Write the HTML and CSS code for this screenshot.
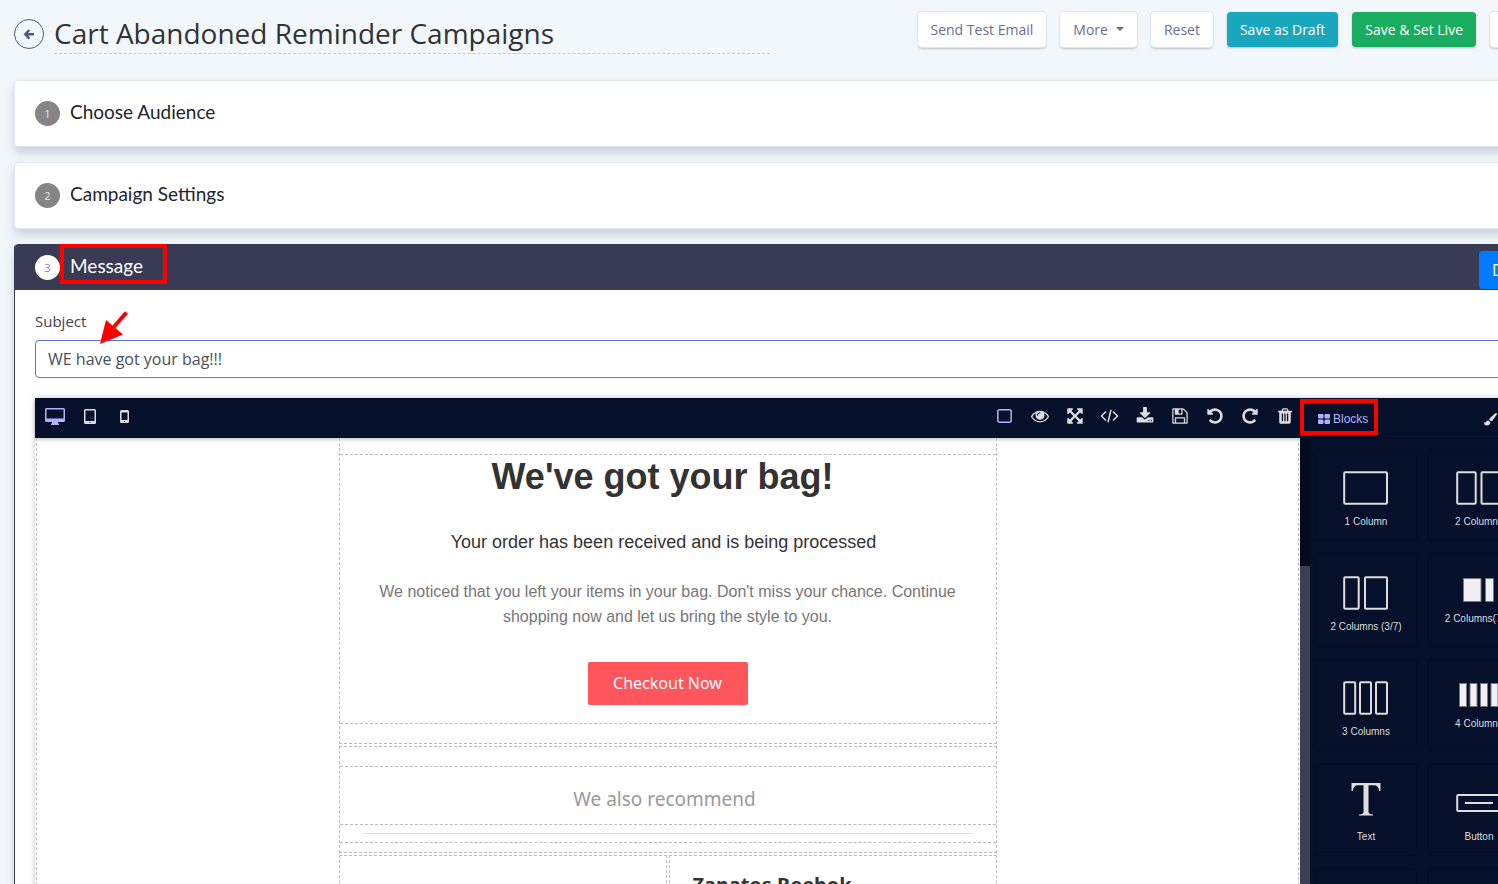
FILE: index.html
```html
<!DOCTYPE html>
<html lang="en">
<head>
<meta charset="utf-8">
<title>Cart Abandoned Reminder Campaigns</title>
<link rel="stylesheet" href="styles.css">
</head>
<body>
<svg class="sprite" aria-hidden="true">
  <symbol id="undo" viewBox="0 0 1792 1792"><path d="M1664 896q0 156-61 298t-164 245-245 164-298 61q-172 0-327-72.5t-264-204.5q-7-10-6.5-22.5t8.5-20.5l137-138q10-9 25-9 16 2 23 12 73 95 179 147t225 52q104 0 198.5-40.5t163.5-109.5 109.5-163.5 40.5-198.5-40.5-198.5-109.5-163.5-163.5-109.5-198.5-40.5q-98 0-188 35.5t-160 101.5l137 138q31 30 14 69-17 40-59 40h-448q-26 0-45-19t-19-45v-448q0-42 40-59 39-17 69 14l130 129q107-101 244.5-156.5t284.5-55.5q156 0 298 61t245 164 164 245 61 298z"/></symbol>
</svg>
<div class="page">
  <header class="topbar">
    <button class="back" aria-label="Back"><svg width="12" height="12" viewBox="0 0 12 12"><path d="M6.300 2 2.300 6.300 6.300 10.600M2.500 6.300H11" fill="none" stroke="currentColor" stroke-width="2.400"/></svg></button>
    <h1 class="title">Cart Abandoned Reminder Campaigns</h1>
    <div class="actions">
      <button class="btn">Send Test Email</button>
      <button class="btn">More<span class="caret"></span></button>
      <button class="btn">Reset</button>
      <button class="btn btn-draft">Save as Draft</button>
      <button class="btn btn-live">Save &amp; Set Live</button>
      <button class="btn btn-last">Cancel</button>
    </div>
  </header>

  <main class="steps">
    <section class="card step"><span class="num">1</span><h2 class="step-title">Choose Audience</h2></section>
    <section class="card step"><span class="num">2</span><h2 class="step-title">Campaign Settings</h2></section>

    <section class="card message">
      <div class="message-head">
        <span class="num num-active">3</span>
        <h2 class="step-title marked">Message<span class="mark mark-message"></span></h2>
        <button class="done">Done</button>
      </div>
      <div class="message-body">
        <div class="field">
          <label class="label" for="subject">Subject</label>
          <input class="input" id="subject" type="text" value="WE have got your bag!!!">
          <svg class="pointer" width="30" height="34" viewBox="0 0 30 34"><path d="M26.500 1.500 12 18" stroke="#f00" stroke-width="4"/><path d="M0 33 6 9 23 23.500Z" fill="#f00"/></svg>
        </div>

        <div class="editor">
          <div class="workspace">
            <div class="toolbar">
              <button class="tool on" aria-label="Desktop"><svg width="20" height="17" viewBox="0 0 20 17"><path fill-rule="evenodd" d="M1.500 0h17Q20 0 20 1.500v11q0 1.500-1.500 1.500H13v1.500h1V17H6v-1.500h1V14H1.500Q0 14 0 12.500v-11Q0 0 1.500 0ZM1.500 1.500v9h17v-9Z"/></svg></button>
              <button class="tool" aria-label="Tablet"><svg width="12" height="15" viewBox="0 0 12 15"><path fill-rule="evenodd" d="M1.500 0h9Q12 0 12 1.500v12q0 1.500-1.500 1.500h-9Q0 15 0 13.500v-12Q0 0 1.500 0Zm0 1.500v10.500h9V1.500Zm4 11.500v1h1v-1Z"/></svg></button>
              <button class="tool" aria-label="Mobile"><svg width="9" height="13" viewBox="0 0 9 13"><path fill-rule="evenodd" d="M1.500 0h6Q9 0 9 1.500v10Q9 13 7.500 13h-6Q0 13 0 11.500v-10Q0 0 1.500 0ZM1.500 2.500v7.500h6V2.500ZM4 11v1h1v-1Z"/></svg></button>
              <span class="spacer"></span>
              <button class="tool on" aria-label="Outline"><svg width="15" height="14" viewBox="0 0 15 14"><rect x=".8" y=".8" width="13.400" height="12.400" rx="2" fill="none" stroke="currentColor" stroke-width="1.500"/></svg></button>
              <button class="tool" aria-label="Preview"><svg width="18" height="18" viewBox="0 0 1792 1792"><path d="M1664 960q-152-236-381-353 61 104 61 225 0 185-131.500 316.500t-316.500 131.500-316.500-131.500-131.500-316.500q0-121 61-225-229 117-381 353 133 205 333.500 326.500t434.500 121.500 434.500-121.500 333.500-326.500zm-720-384q0-20-14-34t-34-14q-125 0-214.500 89.500t-89.500 214.500q0 20 14 34t34 14 34-14 14-34q0-86 61-147t147-61q20 0 34-14t14-34zm848 384q0 34-20 69-140 230-376.500 368.500t-499.500 138.500-499.500-139-376.500-368q-20-35-20-69t20-69q140-229 376.500-368t499.500-139 499.500 139 376.500 368q20 35 20 69z"/></svg></button>
              <button class="tool" aria-label="Fullscreen"><svg width="18" height="18" viewBox="0 0 1792 1792"><path d="M1411 541l-355 355 355 355 144-144q29-31 70-14 39 17 39 59v448q0 26-19 45t-45 19h-448q-42 0-59-40-17-39 14-69l144-144-355-355-355 355 144 144q31 30 14 69-17 40-59 40h-448q-26 0-45-19t-19-45v-448q0-42 40-59 39-17 69 14l144 144 355-355-355-355-144 144q-19 19-45 19-12 0-24-5-40-17-40-59v-448q0-26 19-45t45-19h448q42 0 59 40 17 39-14 69l-144 144 355 355 355-355-144-144q-31-30-14-69 17-40 59-40h448q26 0 45 19t19 45v448q0 42-39 59-13 5-25 5-26 0-45-19z"/></svg></button>
              <button class="tool" aria-label="View code"><svg width="19" height="14" viewBox="0 0 19 14"><path d="M6 2.500 1.500 7 6 11.500M13 2.500 17.500 7 13 11.500M11 .8 8 13.200" fill="none" stroke="currentColor" stroke-width="1.500"/></svg></button>
              <button class="tool" aria-label="Import"><svg width="18" height="18" viewBox="0 0 1792 1792"><path d="M1344 1344q0-26-19-45t-45-19-45 19-19 45 19 45 45 19 45-19 19-45zm256 0q0-26-19-45t-45-19-45 19-19 45 19 45 45 19 45-19 19-45zm128-224v320q0 40-28 68t-68 28h-1472q-40 0-68-28t-28-68v-320q0-40 28-68t68-28h465l135 136q58 56 136 56t136-56l136-136h464q40 0 68 28t28 68zm-325-569q17 41-14 70l-448 448q-18 19-45 19t-45-19l-448-448q-31-29-14-70 17-39 59-39h256v-448q0-26 19-45t45-19h256q26 0 45 19t19 45v448h256q42 0 59 39z"/></svg></button>
              <button class="tool" aria-label="Save"><svg width="18" height="18" viewBox="0 0 1792 1792"><path d="M512 1536h768v-384h-768v384zm896 0h128v-896q0-14-10-38.500t-20-34.500l-281-281q-10-10-34-20t-39-10v416q0 40-28 68t-68 28h-576q-40 0-68-28t-28-68v-416h-128v1280h128v-416q0-40 28-68t68-28h832q40 0 68 28t28 68v416zm-384-928v-320q0-13-9.500-22.500t-22.500-9.500h-192q-13 0-22.500 9.500t-9.500 22.500v320q0 13 9.500 22.500t22.500 9.500h192q13 0 22.500-9.500t9.500-22.500zm640 32v928q0 40-28 68t-68 28h-1344q-40 0-68-28t-28-68v-1344q0-40 28-68t68-28h928q40 0 88 20t76 48l280 280q28 28 48 76t20 88z"/></svg></button>
              <button class="tool" aria-label="Undo"><svg width="18" height="18"><use href="#undo"/></svg></button>
              <button class="tool" aria-label="Redo"><svg class="flip" width="18" height="18"><use href="#undo"/></svg></button>
              <button class="tool" aria-label="Clear"><svg width="18" height="18" viewBox="0 0 1792 1792"><path d="M704 1376v-704q0-14-9-23t-23-9h-64q-14 0-23 9t-9 23v704q0 14 9 23t23 9h64q14 0 23-9t9-23zm256 0v-704q0-14-9-23t-23-9h-64q-14 0-23 9t-9 23v704q0 14 9 23t23 9h64q14 0 23-9t9-23zm256 0v-704q0-14-9-23t-23-9h-64q-14 0-23 9t-9 23v704q0 14 9 23t23 9h64q14 0 23-9t9-23zm-544-992h448l-48-117q-7-9-17-11h-317q-10 2-17 11zm928 32v64q0 14-9 23t-23 9h-96v948q0 83-47 143.500t-113 60.500h-832q-66 0-113-58.500t-47-141.500v-952h-96q-14 0-23-9t-9-23v-64q0-14 9-23t23-9h309l70-167q15-37 54-63t79-26h320q40 0 79 26t54 63l70 167h309q14 0 23 9t9 23z"/></svg></button>
            </div>
            <div class="canvas">
              <div class="email">
                <div class="section section-first">
                  <div class="block intro">
                    <h3 class="headline">We've got your bag!</h3>
                    <p class="lead">Your order has been received and is being processed</p>
                    <p class="copy">We noticed that you left your items in your bag. Don't miss your chance. Continue shopping now and let us bring the style to you.</p>
                    <a class="checkout" href="#">Checkout Now</a>
                  </div>
                </div>
                <div class="section section-recommend">
                  <p class="recommend">We also recommend</p>
                  <div class="block rule"><hr class="line"></div>
                </div>
                <div class="products">
                  <div class="product"></div>
                  <div class="product"><h4 class="product-name">Zapatos Reebok</h4></div>
                </div>
              </div>
            </div>
          </div>

          <aside class="side">
            <div class="tabs">
              <button class="tab on"><svg width="12" height="10" viewBox="0 0 12 10"><path d="M1 0h3.500q1 0 1 1v2.500q0 1-1 1H1q-1 0-1-1V1q0-1 1-1Zm6.500 0H11q1 0 1 1v2.500q0 1-1 1H7.500q-1 0-1-1V1q0-1 1-1ZM1 5.500h3.500q1 0 1 1V9q0 1-1 1H1Q0 10 0 9V6.500q0-1 1-1Zm6.500 0H11q1 0 1 1V9q0 1-1 1H7.500q-1 0-1-1V6.500q0-1 1-1Z"/></svg>Blocks<span class="mark mark-blocks"></span></button>
              <button class="tab tab-style"><svg width="13" height="13" viewBox="0 0 13 13"><path d="M12.700.3Q13.300 1 12.500 2L8.500 7.500Q7.700 8.500 6.700 8.300L5.300 6.800Q5.200 5.800 6 5L11 .5Q12-.3 12.700.3ZM4.500 7.400 6.200 9.200Q6 12.500 2.800 12.500 0 12.500 0 9.300 1.500 10 2 8.700 3 7.200 4.500 7.400Z"/></svg>Style</button>
            </div>
            <div class="side-body">
              <div class="track"><div class="thumb"></div></div>
              <div class="blocks">
                <button class="cell"><svg class="art" width="46" height="34" viewBox="0 0 46 34"><rect x="1.200" y="1.200" width="42.800" height="31.500" rx="1"/></svg>1 Column</button>
                <button class="cell"><svg class="art" width="46" height="34" viewBox="0 0 46 34"><rect x="1.200" y="1.200" width="18.500" height="31.500" rx="1"/><rect x="25.500" y="1.200" width="18.500" height="31.500" rx="1"/></svg>2 Columns</button>
                <button class="cell"><svg class="art" width="46" height="34" viewBox="0 0 46 34"><rect x="1.200" y="1.200" width="14.500" height="31.500" rx="1"/><rect x="22" y="1.200" width="22" height="31.500" rx="1"/></svg>2 Columns (3/7)</button>
                <button class="cell cell-solid"><svg class="solid" width="32" height="24" viewBox="0 0 32 24"><path d="M.5.5h17.500v23H.5ZM22.500.5h8v23h-8Z"/></svg>2 Columns(7/3)</button>
                <button class="cell"><svg class="art" width="46" height="34" viewBox="0 0 46 34"><rect x="1.200" y="1.200" width="11" height="31.500" rx="1"/><rect x="17" y="1.200" width="11" height="31.500" rx="1"/><rect x="33" y="1.200" width="11" height="31.500" rx="1"/></svg>3 Columns</button>
                <button class="cell cell-solid"><svg class="solid" width="40" height="24" viewBox="0 0 40 24"><path d="M.5.5h7v23h-7ZM11 .5h7v23h-7ZM21.500.5h7v23h-7ZM32 .5h7v23h-7Z"/></svg>4 Columns</button>
                <button class="cell cell-letter"><svg width="30" height="37" viewBox="0 0 30 37"><path d="M.5 0h29v8h-1.200Q27.500 2.300 23 2.300H17.500V29Q17.500 31 22 31.500V32.500H8V31.500Q12.500 31 12.500 29V2.300H7Q2.500 2.300 1.700 8H.5Z"/></svg>Text</button>
                <button class="cell"><svg class="art" width="46" height="34" viewBox="0 0 46 34"><rect x="1.200" y="9" width="43.500" height="16" rx="1"/><path d="M9 17h28"/></svg>Button</button>
                <button class="cell" aria-label="Divider"></button>
                <button class="cell" aria-label="Image"></button>
              </div>
            </div>
          </aside>
        </div>
      </div>
    </section>
  </main>
</div>
</body>
</html>
```
FILE: styles.css
```css
* { box-sizing: border-box; }

body {
  margin: 0;
  height: 100vh;
  overflow: hidden;
  background: #f2f7fc;
  color: #333;
  font-family: "Open Sans", "Noto Sans", sans-serif;
}

button { font: inherit; border: 0; padding: 0; background: none; cursor: pointer; }
h1, h2, h3, h4, p { margin: 0; font-weight: 400; }
svg { display: block; fill: currentColor; flex: none; }
.sprite { position: absolute; width: 0; height: 0; }

/* The content is wider than the window and runs off its right side. */
.page { margin-right: -80px; padding-left: 14px; }

.topbar { display: flex; align-items: flex-start; padding-top: 12px; }
.back {
  display: flex; align-items: center; justify-content: center;
  width: 30px; height: 30px; margin: 7px 10px 0 0;
  border: 1px solid #4b5a86; border-radius: 50%; color: #4b5a86;
}
.title {
  width: 716px; height: 42px;
  font-size: 28px; line-height: 42px;
  border-bottom: 1px dashed #c3cbcf;
  white-space: nowrap;
}
.actions { display: flex; gap: 14px; margin-left: auto; }
.btn {
  height: 35px; padding: 0 13px 1px;
  display: flex; align-items: center;
  border-radius: 4px; background: #fff; color: #66718f;
  font-size: 14px; white-space: nowrap;
  box-shadow: 0 0 0 1px #dfe3ee, 0 2px 2px rgba(50, 50, 93, .25);
}
.btn-draft { background: #18a7bd; color: #fff; box-shadow: 0 1px 2px rgba(50, 50, 93, .3); }
.btn-live { background: #1aad5f; color: #fff; box-shadow: 0 1px 2px rgba(50, 50, 93, .3); }
.btn-last { width: 88px; justify-content: center; }
.caret { margin-left: 8px; border: 4px solid transparent; border-top-color: currentColor; border-bottom: 0; }

.steps { display: flex; flex-direction: column; gap: 15px; padding: 26px 21px 0 0; }
.card {
  background: #fff; border: 1px solid #e1e7f1; border-radius: 4px;
  box-shadow: 0 6px 10px rgba(60, 66, 87, .2);
}
.step { display: flex; align-items: center; height: 67px; padding: 0 20px; }
.num {
  display: flex; align-items: center; justify-content: center;
  width: 25px; height: 25px; margin-right: 10px;
  border-radius: 50%; background: #858585; color: #e6e6e6; font-size: 11px;
}
.num-active { background: #fff; color: #7c83e0; }
.step-title { padding-bottom: 3px; font-family: Lato, sans-serif; font-size: 19px; line-height: 24px; color: #212529; }

.message { border: 0; border-left: 1px solid #393a54; }
.message-head {
  display: flex; align-items: center; height: 46px; padding-left: 20px;
  background: #393a54; border-radius: 4px 4px 0 0;
}
.message-head .step-title { color: #fff; }
.marked { position: relative; }
.mark { position: absolute; border: 4px solid #f00; }
.mark-message { left: -10px; right: -24px; top: -10px; height: 40px; }
.done {
  height: 38px; width: 78px; margin: 6px 0 0 auto; padding-left: 13px;
  border-radius: 4px; background: #007bff; color: #fff; font-size: 16px; text-align: left;
}
.message-body { padding: 20px 21px 0 20px; }
.field { position: relative; }
.label { display: block; height: 30px; font-size: 15px; line-height: 22px; color: #444; }
.input {
  display: block; width: 100%; height: 38px; padding: 0 12px;
  border: 1px solid #5e72e4; border-radius: 4px; background: #fff;
  font: 16px "Open Sans", sans-serif; color: #495057;
}
.pointer { position: absolute; left: 65px; top: 1px; }

.editor { display: flex; margin-top: 20px; font-family: "Liberation Sans", Arial, sans-serif; box-shadow: 0 0 5px rgba(0, 0, 0, .25); }
.workspace { flex: 1; min-width: 0; background: #fff; }
.toolbar {
  display: flex; height: 40px; padding-left: 2px;
  background: #06102b; color: #ddd;
  box-shadow: 0 2px 3px rgba(0, 0, 0, .2);
}
.tool { display: flex; align-items: center; justify-content: center; width: 35px; height: 36px; color: #ddd; }
.on { color: #b1b1ff; }
.spacer { flex: 1; }
.tool:last-child { margin-right: -2px; }
.flip { transform: scaleX(-1); }

.canvas { margin: 0 1px; border: dashed #bbb; border-width: 0 1px; }
.email { width: 658px; margin: 0 auto; }
.section { border: 1px dashed #bbb; margin-bottom: 2px; }
.section-first { border-top: 0; padding: 16px 0 19px; }
.block { border: dashed #bbb; border-width: 1px 0; }
.intro { display: flex; flex-direction: column; align-items: center; height: 270px; text-align: center; }
.headline { padding-right: 10px; font-size: 36px; line-height: 44px; font-weight: 700; color: #333; }
.lead { margin-top: 32px; padding-right: 8px; font-size: 18px; line-height: 22px; color: #333; }
.copy { margin-top: 26px; padding: 0 24px; font-size: 16px; line-height: 25px; color: #777; }
.checkout {
  margin-top: 33px; width: 160px; border-radius: 2px;
  background: #ff565e; color: #fff; text-decoration: none;
  font: 16px/43px "Noto Sans", sans-serif;
}
.section-recommend { padding: 19px 0 9px; }
.recommend {
  height: 58px; padding-right: 6px; border-top: 1px dashed #bbb; text-align: center;
  font: 19px/64px "Noto Sans", sans-serif; color: #999;
}
.rule { height: 19px; padding: 8px 23px; }
.line { margin: 0; border: 0; height: 1px; background: #ddd; }
.products { display: flex; gap: 2px; }
.product { flex: 1; height: 200px; border: 1px dashed #bbb; padding: 13px 23px; }
.product-name { font: 700 20px/32px "Noto Sans", sans-serif; color: #333; }

.side { width: 236px; background: #06102b; color: #ddd; }
.tabs { display: flex; height: 41px; margin-bottom: -1px; border-bottom: 1px solid #040b20; }
.tab { position: relative; display: flex; align-items: center; gap: 3px; padding: 1px 0 0 18px; font-size: 12px; color: #ddd; }
.tab.on { color: #b1b1ff; }
.tab-style { margin-left: auto; width: 52px; padding: 2px 0 0; }
.mark-blocks { left: 0; top: 1px; width: 78px; height: 36px; }
.side-body { display: flex; }
.track { width: 10px; padding-top: 128px; background: #040a1c; }
.thumb { height: 100%; background: #3a4050; }
.blocks { display: grid; grid-template-columns: 100px 100px; gap: 15px 13px; padding: 12px 0 0 6px; }
.cell {
  display: flex; flex-direction: column; align-items: center;
  height: 90px; padding-top: 21px; gap: 9px;
  border-radius: 2px; box-shadow: 0 0 2px rgba(0, 0, 0, .7);
  font-size: 10px; line-height: 16px; color: #ddd; white-space: nowrap;
}
.cell svg { color: #ddd; }
.art { fill: none; stroke: currentColor; stroke-width: 2; }
.solid { fill: #f0f0f4; stroke: #777; }
.cell-solid { padding-top: 23px; }
.cell-letter { padding-top: 18px; }
```
